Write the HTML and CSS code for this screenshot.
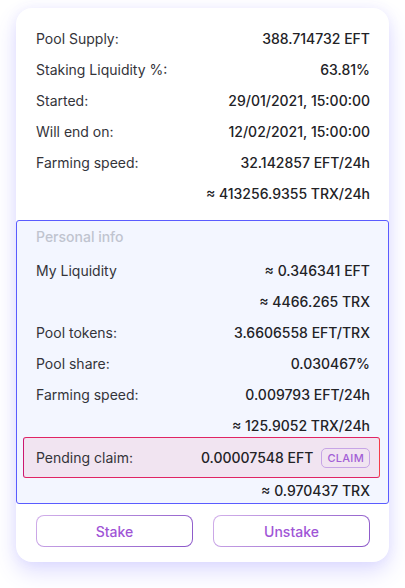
FILE: index.html
```html
<!DOCTYPE html>
<html>
<head>
<meta charset="utf-8">
<link rel="stylesheet" href="styles.css">
</head>
<body>
<div class="card">
  <div class="general">
    <div class="row"><span class="label">Pool Supply:</span><span class="value">388.714732 EFT</span></div>
    <div class="row"><span class="label">Staking Liquidity %:</span><span class="value">63.81%</span></div>
    <div class="row"><span class="label">Started:</span><span class="value">29/01/2021, 15:00:00</span></div>
    <div class="row"><span class="label">Will end on:</span><span class="value">12/02/2021, 15:00:00</span></div>
    <div class="row"><span class="label">Farming speed:</span><span class="value">32.142857 EFT/24h</span></div>
    <div class="row"><span class="label"></span><span class="value">≈ 413256.9355 TRX/24h</span></div>
  </div>
  <div class="personal">
    <div class="row heading">Personal info</div>
    <div class="row"><span class="label">My Liquidity</span><span class="value">≈ 0.346341 EFT</span></div>
    <div class="row"><span class="label"></span><span class="value">≈ 4466.265 TRX</span></div>
    <div class="row"><span class="label">Pool tokens:</span><span class="value">3.6606558 EFT/TRX</span></div>
    <div class="row"><span class="label">Pool share:</span><span class="value">0.030467%</span></div>
    <div class="row"><span class="label">Farming speed:</span><span class="value">0.009793 EFT/24h</span></div>
    <div class="row"><span class="label"></span><span class="value">≈ 125.9052 TRX/24h</span></div>
    <div class="pending">
      <span class="label">Pending claim:</span>
      <span class="pending-right"><span class="value">0.00007548 EFT</span><span class="claim">CLAIM</span></span>
    </div>
    <div class="row last"><span class="label"></span><span class="value">≈ 0.970437 TRX</span></div>
  </div>
  <div class="actions">
    <div class="btn"><span>Stake</span></div>
    <div class="btn"><span>Unstake</span></div>
  </div>
</div>
</body>
</html>
```
FILE: styles.css
```css
* { box-sizing: border-box; }
html, body { margin: 0; padding: 0; background: #ffffff; }
body {
  font-family: Inter, "Noto Sans", sans-serif;
  font-size: 14px;
  color: #2a2a2e;
  padding: 8px 16px 25px 16px;
  min-height: 588px;
}
.card {
  width: 373px;
  background: #ffffff;
  border-radius: 16px;
  box-shadow: 0 10px 22px rgba(95, 85, 255, 0.2), 0 0 12px rgba(110, 100, 255, 0.08);
  padding-top: 15px;
  padding-bottom: 15px;
  overflow: hidden;
}
.general {
  padding: 0 19px 11px 20px;
}
.row {
  height: 31px;
  display: flex;
  align-items: center;
  justify-content: space-between;
}
.label { color: #34343a; font-weight: 400; }
.value { color: #222226; font-weight: 500; }
.personal {
  background: #f3f6ff;
  border: 1px solid #5a5cff;
  border-radius: 3px;
  padding: 0 18px 0 19px;
}
.heading {
  color: #c0c4cf;
  font-weight: 500;
  height: 31px;
  margin-bottom: 3px;
}
.pending {
  margin: -4px -10px 0 -13px;
  height: 41px;
  border-radius: 3px;
  border: 1px solid #ee2a5a;
  border-left-color: #cc1870;
  border-top-color: #e02464;
  border-bottom-color: #e02464;
  border-right-color: #f53c48;
  background: #f1e4f1;
  display: flex;
  align-items: center;
  justify-content: space-between;
  padding: 0 9px 0 12px;
}
.pending-right { display: flex; align-items: center; gap: 8px; }
.claim {
  font-size: 11px;
  color: #a35fd6;
  border: 1px solid #c7a5e6;
  border-radius: 5px;
  padding: 2px 5px;
  letter-spacing: 0.3px;
  font-weight: 500;
}
.last { height: 25px; }
.actions {
  display: flex;
  gap: 20px;
  padding: 11px 19px 0 20px;
}
.btn {
  flex: 1;
  height: 32px;
  border-radius: 8px;
  padding: 1px;
  background: linear-gradient(135deg, #d2b0ea, #8a55c8);
}
.btn span {
  display: flex;
  align-items: center;
  justify-content: center;
  height: 100%;
  background: #ffffff;
  border-radius: 7px;
  color: #a055d6;
  font-size: 14px;
  font-weight: 500;
}
```
